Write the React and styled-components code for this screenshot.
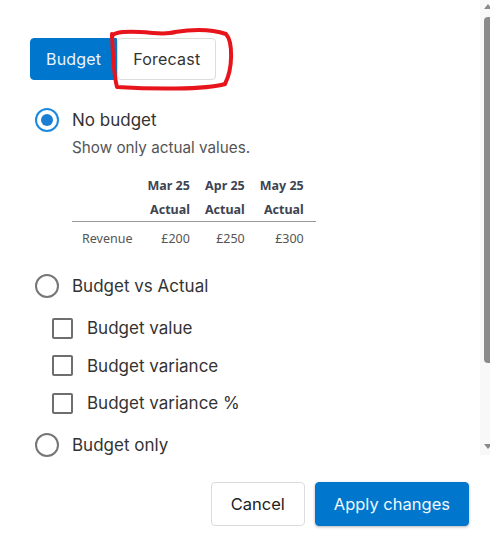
import React from "react";
import styled, { createGlobalStyle } from "styled-components";

const Global = createGlobalStyle`
  html, body { margin: 0; padding: 0; background: #fff; }
  body { font-family: "Inter", "Noto Sans", sans-serif; }
`;

const Page = styled.div`
  position: relative;
  width: 490px;
  height: 547px;
  background: #fff;
  overflow: hidden;
`;

const ScrollArea = styled.div`
  display: flex;
  height: 455px;
`;

const Content = styled.div`
  flex: 1;
  padding: 38px 0 0 30px;
`;

const Track = styled.div`
  position: relative;
  width: 10px;
  background: #f8f8f8;
`;

const Thumb = styled.div`
  position: absolute;
  left: 4px;
  right: -3px;
  top: 17px;
  bottom: 92px;
  background: #8a8a8a;
  border-radius: 4px;
`;

const Arrow = styled.div`
  position: absolute;
  left: 4px;
  width: 0;
  height: 0;
  border-left: 4px solid transparent;
  border-right: 4px solid transparent;
  ${(p) =>
    p.$down
      ? `bottom: 6px; border-top: 5px solid #8a8a8a;`
      : `top: 4px; border-bottom: 5px solid #8a8a8a;`}
`;

const Tabs = styled.div`
  display: flex;
`;

const Tab = styled.button`
  height: 42px;
  padding: 0 15px;
  font-family: "Inter", sans-serif;
  font-size: 16px;
  letter-spacing: 0.2px;
  border-radius: 4px;
  cursor: pointer;
  border: 1px solid ${(p) => (p.$active ? "#0077cc" : "#dcdcdc")};
  background: ${(p) => (p.$active ? "#0077cc" : "#fff")};
  color: ${(p) => (p.$active ? "#eaf4fc" : "#333")};
  ${(p) => (p.$active ? "border-top-right-radius:0;border-bottom-right-radius:0;" : "")}
`;

const RadioRow = styled.label`
  display: flex;
  align-items: center;
  gap: 13px;
  margin-left: 5px;
  margin-top: ${(p) => p.$mt || 0}px;
  font-family: "Inter", sans-serif;
  font-size: 17px;
  color: #333;
  height: 24px;
`;

const Radio = styled.span`
  box-sizing: border-box;
  width: 24px;
  height: 24px;
  border-radius: 50%;
  border: 2px solid ${(p) => (p.$checked ? "#1a8ae0" : "#767676")};
  display: flex;
  align-items: center;
  justify-content: center;
  flex-shrink: 0;
  &::after {
    content: "";
    display: ${(p) => (p.$checked ? "block" : "none")};
    width: 12px;
    height: 12px;
    border-radius: 50%;
    background: #1a7fd4;
  }
`;

const Desc = styled.div`
  margin: 6px 0 0 42px;
  height: 20px;
  line-height: 20px;
  font-family: "Inter", sans-serif;
  font-size: 15.25px;
  color: #555;
`;

const Table = styled.table`
  margin: 16px 0 0 42px;
  border-collapse: collapse;
  font-family: "Noto Sans", sans-serif;
  font-size: 12.5px;
`;

const Th = styled.th`
  font-weight: 700;
  color: #3d4452;
  text-align: right;
  padding: 0 0 0 15px;
  height: 23px;
  vertical-align: middle;
  &:first-child { padding-left: 10px; }
  &:last-child { padding-right: 12px; }
  ${(p) => (p.$line ? "border-bottom: 1.5px solid #999;height:24px;" : "")}
`;

const Td = styled.td`
  color: #555;
  text-align: ${(p) => (p.$left ? "left" : "right")};
  padding: 0 0 0 15px;
  height: 32px;
  &:first-child { padding-left: 10px; }
  &:last-child { padding-right: 12px; }
`;

const CheckList = styled.div`
  display: flex;
  flex-direction: column;
  gap: 15.5px;
  margin: 19px 0 0 22px;
`;

const CheckRow = styled.label`
  display: flex;
  align-items: center;
  gap: 14px;
  font-family: "Inter", sans-serif;
  font-size: 17px;
  color: #333;
  height: 22px;
`;

const Box = styled.span`
  box-sizing: border-box;
  width: 21px;
  height: 21px;
  border: 2px solid #6e6e6e;
  border-radius: 2px;
  flex-shrink: 0;
`;

const Footer = styled.div`
  display: flex;
  justify-content: flex-end;
  gap: 10px;
  padding: 27px 21px 0 0;
`;

const Btn = styled.button`
  height: 44px;
  padding: 0 ${(p) => (p.$primary ? "18px" : "19px")};
  font-family: "Inter", sans-serif;
  font-size: 16.5px;
  border-radius: 4px;
  cursor: pointer;
  border: 1px solid ${(p) => (p.$primary ? "#0077cc" : "#dcdcdc")};
  background: ${(p) => (p.$primary ? "#0077cc" : "#fff")};
  color: ${(p) => (p.$primary ? "#f0f7fd" : "#222")};
  box-shadow: ${(p) => (p.$primary ? "0 1px 3px rgba(0,0,0,0.3)" : "none")};
`;

const Mark = styled.svg`
  position: absolute;
  left: 0;
  top: 0;
  pointer-events: none;
`;

export default function App() {
  return (
    <Page>
      <Global />
      <ScrollArea>
        <Content>
          <Tabs>
            <Tab $active>Budget</Tab>
            <Tab>Forecast</Tab>
          </Tabs>
          <RadioRow $mt={28}>
            <Radio $checked />
            No budget
          </RadioRow>
          <Desc>Show only actual values.</Desc>
          <Table>
            <thead>
              <tr>
                <Th />
                <Th>Mar 25</Th>
                <Th>Apr 25</Th>
                <Th>May 25</Th>
              </tr>
              <tr>
                <Th $line />
                <Th $line>Actual</Th>
                <Th $line>Actual</Th>
                <Th $line>Actual</Th>
              </tr>
            </thead>
            <tbody>
              <tr>
                <Td $left>Revenue</Td>
                <Td>£200</Td>
                <Td>£250</Td>
                <Td>£300</Td>
              </tr>
            </tbody>
          </Table>
          <RadioRow $mt={20}>
            <Radio />
            Budget vs Actual
          </RadioRow>
          <CheckList>
            <CheckRow>
              <Box />
              Budget value
            </CheckRow>
            <CheckRow>
              <Box />
              Budget variance
            </CheckRow>
            <CheckRow>
              <Box />
              Budget variance %
            </CheckRow>
          </CheckList>
          <RadioRow $mt={19}>
            <Radio />
            Budget only
          </RadioRow>
        </Content>
        <Track>
          <Arrow />
          <Thumb />
          <Arrow $down />
        </Track>
      </ScrollArea>
      <Footer>
        <Btn>Cancel</Btn>
        <Btn $primary>Apply changes</Btn>
      </Footer>
      <Mark width="490" height="547" viewBox="0 0 490 547">
        <path
          d="M112,38 C111,33 120,31 140,32 C158,33 165,35 175,32 C195,29 214,30 226,34 C233,42 233,68 225,84 C205,90 150,89 117,87 C113,72 113,52 112,34"
          fill="none"
          stroke="#e8141c"
          strokeWidth="4"
          strokeLinecap="round"
          strokeLinejoin="round"
        />
      </Mark>
    </Page>
  );
}
